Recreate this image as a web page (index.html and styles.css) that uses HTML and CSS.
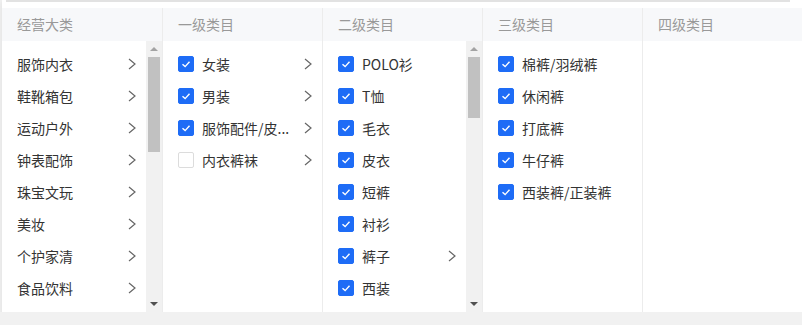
FILE: index.html
```html
<!DOCTYPE html>
<html lang="zh-CN">
<head>
    <meta charset="UTF-8">
    <title>类目选择</title>
    <link rel="stylesheet" href="styles.css">
</head>
<body>
    <div class="card">
        <div class="topline"></div>
        <div class="cascader">
            <div class="col">
                <div class="col-head">经营大类</div>
                <div class="col-body">
                    <ul class="list">
                        <li class="item"><span class="label">服饰内衣</span><svg class="arrow" viewBox="0 0 8 12"><path d="M1 1 L7 6 L1 11"/></svg></li>
                        <li class="item"><span class="label">鞋靴箱包</span><svg class="arrow" viewBox="0 0 8 12"><path d="M1 1 L7 6 L1 11"/></svg></li>
                        <li class="item"><span class="label">运动户外</span><svg class="arrow" viewBox="0 0 8 12"><path d="M1 1 L7 6 L1 11"/></svg></li>
                        <li class="item"><span class="label">钟表配饰</span><svg class="arrow" viewBox="0 0 8 12"><path d="M1 1 L7 6 L1 11"/></svg></li>
                        <li class="item"><span class="label">珠宝文玩</span><svg class="arrow" viewBox="0 0 8 12"><path d="M1 1 L7 6 L1 11"/></svg></li>
                        <li class="item"><span class="label">美妆</span><svg class="arrow" viewBox="0 0 8 12"><path d="M1 1 L7 6 L1 11"/></svg></li>
                        <li class="item"><span class="label">个护家清</span><svg class="arrow" viewBox="0 0 8 12"><path d="M1 1 L7 6 L1 11"/></svg></li>
                        <li class="item"><span class="label">食品饮料</span><svg class="arrow" viewBox="0 0 8 12"><path d="M1 1 L7 6 L1 11"/></svg></li>
                    </ul>
                    <div class="scrollbar">
                        <span class="sb-btn sb-up"></span>
                        <div class="sb-track"><div class="sb-thumb thumb-long"></div></div>
                        <span class="sb-btn sb-down"></span>
                    </div>
                </div>
            </div>

            <div class="col">
                <div class="col-head">一级类目</div>
                <div class="col-body">
                    <ul class="list">
                        <li class="item"><span class="check on"><svg viewBox="0 0 16 16"><path d="M4 8.2 L7 11 L12 5.5"/></svg></span><span class="label">女装</span><svg class="arrow" viewBox="0 0 8 12"><path d="M1 1 L7 6 L1 11"/></svg></li>
                        <li class="item"><span class="check on"><svg viewBox="0 0 16 16"><path d="M4 8.2 L7 11 L12 5.5"/></svg></span><span class="label">男装</span><svg class="arrow" viewBox="0 0 8 12"><path d="M1 1 L7 6 L1 11"/></svg></li>
                        <li class="item"><span class="check on"><svg viewBox="0 0 16 16"><path d="M4 8.2 L7 11 L12 5.5"/></svg></span><span class="label">服饰配件/皮...</span><svg class="arrow" viewBox="0 0 8 12"><path d="M1 1 L7 6 L1 11"/></svg></li>
                        <li class="item"><span class="check"></span><span class="label">内衣裤袜</span><svg class="arrow" viewBox="0 0 8 12"><path d="M1 1 L7 6 L1 11"/></svg></li>
                    </ul>
                </div>
            </div>

            <div class="col">
                <div class="col-head">二级类目</div>
                <div class="col-body">
                    <ul class="list">
                        <li class="item"><span class="check on"><svg viewBox="0 0 16 16"><path d="M4 8.2 L7 11 L12 5.5"/></svg></span><span class="label">POLO衫</span></li>
                        <li class="item"><span class="check on"><svg viewBox="0 0 16 16"><path d="M4 8.2 L7 11 L12 5.5"/></svg></span><span class="label">T恤</span></li>
                        <li class="item"><span class="check on"><svg viewBox="0 0 16 16"><path d="M4 8.2 L7 11 L12 5.5"/></svg></span><span class="label">毛衣</span></li>
                        <li class="item"><span class="check on"><svg viewBox="0 0 16 16"><path d="M4 8.2 L7 11 L12 5.5"/></svg></span><span class="label">皮衣</span></li>
                        <li class="item"><span class="check on"><svg viewBox="0 0 16 16"><path d="M4 8.2 L7 11 L12 5.5"/></svg></span><span class="label">短裤</span></li>
                        <li class="item"><span class="check on"><svg viewBox="0 0 16 16"><path d="M4 8.2 L7 11 L12 5.5"/></svg></span><span class="label">衬衫</span></li>
                        <li class="item"><span class="check on"><svg viewBox="0 0 16 16"><path d="M4 8.2 L7 11 L12 5.5"/></svg></span><span class="label">裤子</span><svg class="arrow" viewBox="0 0 8 12"><path d="M1 1 L7 6 L1 11"/></svg></li>
                        <li class="item"><span class="check on"><svg viewBox="0 0 16 16"><path d="M4 8.2 L7 11 L12 5.5"/></svg></span><span class="label">西装</span></li>
                    </ul>
                    <div class="scrollbar">
                        <span class="sb-btn sb-up"></span>
                        <div class="sb-track"><div class="sb-thumb thumb-short"></div></div>
                        <span class="sb-btn sb-down"></span>
                    </div>
                </div>
            </div>

            <div class="col">
                <div class="col-head">三级类目</div>
                <div class="col-body">
                    <ul class="list">
                        <li class="item"><span class="check on"><svg viewBox="0 0 16 16"><path d="M4 8.2 L7 11 L12 5.5"/></svg></span><span class="label">棉裤/羽绒裤</span></li>
                        <li class="item"><span class="check on"><svg viewBox="0 0 16 16"><path d="M4 8.2 L7 11 L12 5.5"/></svg></span><span class="label">休闲裤</span></li>
                        <li class="item"><span class="check on"><svg viewBox="0 0 16 16"><path d="M4 8.2 L7 11 L12 5.5"/></svg></span><span class="label">打底裤</span></li>
                        <li class="item"><span class="check on"><svg viewBox="0 0 16 16"><path d="M4 8.2 L7 11 L12 5.5"/></svg></span><span class="label">牛仔裤</span></li>
                        <li class="item"><span class="check on"><svg viewBox="0 0 16 16"><path d="M4 8.2 L7 11 L12 5.5"/></svg></span><span class="label">西装裤/正装裤</span></li>
                    </ul>
                </div>
            </div>

            <div class="col">
                <div class="col-head">四级类目</div>
                <div class="col-body">
                    <ul class="list"></ul>
                </div>
            </div>
        </div>
    </div>
</body>
</html>
```

FILE: styles.css
```css
* {
    margin: 0;
    padding: 0;
    box-sizing: border-box;
}
body {
    background-color: #f1f1f1;
    font-family: "Noto Sans CJK SC", "Noto Sans", sans-serif;
    font-size: 14px;
    color: #333;
    overflow: hidden;
}
.card {
    width: 800px;
    margin-left: 2px;
    background-color: #fff;
    box-shadow: 0 2px 6px rgba(0, 0, 0, 0.08);
}
.topline {
    height: 2px;
    margin: 0 12px 6px 4px;
    background-color: #e2e2e2;
}
.cascader {
    display: grid;
    grid-template-columns: repeat(5, 160px);
}
.col + .col {
    border-left: 1px solid #ececec;
}
.col-head {
    height: 33px;
    line-height: 32px;
    padding-left: 15px;
    background-color: #f7f8fa;
    color: #999;
}
.col-body {
    height: 271px;
    display: flex;
}
.list {
    flex: 1;
    min-width: 0;
    list-style: none;
    padding-top: 7px;
    overflow: hidden;
}
.item {
    height: 32px;
    display: flex;
    align-items: center;
    padding: 0 10px 0 15px;
}
.label {
    flex: 1;
    min-width: 0;
    white-space: nowrap;
    overflow: hidden;
    text-overflow: ellipsis;
    margin-right: 11px;
}
.arrow {
    width: 8px;
    height: 12px;
    flex-shrink: 0;
    fill: none;
    stroke: #666;
    stroke-width: 1.2;
}
.check {
    width: 16px;
    height: 16px;
    flex-shrink: 0;
    margin-right: 8px;
    border: 1px solid #dcdcdc;
    border-radius: 2px;
    background-color: #fff;
}
.check.on {
    border-color: #1e6cf6;
    background-color: #1e6cf6;
}
.check svg {
    display: block;
    width: 14px;
    height: 14px;
    fill: none;
    stroke: #fff;
    stroke-width: 1.6;
}
.scrollbar {
    width: 16px;
    flex-shrink: 0;
    display: flex;
    flex-direction: column;
    background-color: #f1f1f1;
}
.sb-btn {
    height: 16px;
    display: flex;
    align-items: center;
    justify-content: center;
}
.sb-up::before {
    content: "";
    border-left: 4px solid transparent;
    border-right: 4px solid transparent;
    border-bottom: 4px solid #a3a3a3;
}
.sb-down::before {
    content: "";
    border-left: 4px solid transparent;
    border-right: 4px solid transparent;
    border-top: 4px solid #505050;
}
.sb-track {
    flex: 1;
    padding: 0 2px;
}
.sb-thumb {
    background-color: #c1c1c1;
}
.thumb-long {
    height: 95px;
}
.thumb-short {
    height: 61px;
}
```
